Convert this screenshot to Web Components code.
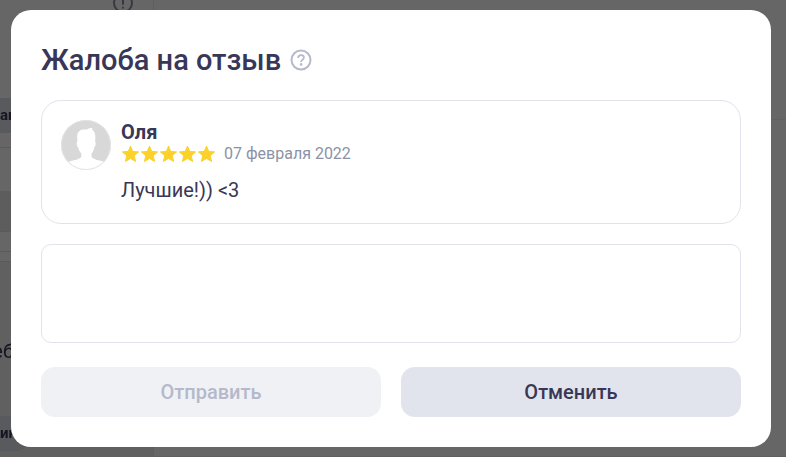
<!DOCTYPE html>
<html lang="ru">
<head>
<meta charset="utf-8">
<meta name="viewport" content="width=device-width, initial-scale=1">
<title>Жалоба на отзыв</title>
<style>
  body { margin: 0; min-height: 100vh; overflow: hidden; background: #fff; color: #393757; font-family: Roboto, "Noto Sans", sans-serif; }
</style>
</head>
<body>
<reviews-page></reviews-page>
<modal-overlay>
  <complaint-dialog heading="Жалоба на отзыв">
    <review-card author="Оля" rating="5" date="07 февраля 2022">Лучшие!)) &lt;3</review-card>
    <complaint-text label="Текст жалобы"></complaint-text>
    <ui-button slot="actions" disabled>Отправить</ui-button>
    <ui-button slot="actions">Отменить</ui-button>
  </complaint-dialog>
</modal-overlay>

<script>
class BaseElement extends HTMLElement {
  render(html) {
    if (!this.shadowRoot) this.attachShadow({ mode: 'open' });
    this.shadowRoot.innerHTML = '<style>*{box-sizing:border-box}</style>' + html;
  }
}

// The page behind the dialog
customElements.define('reviews-page', class extends BaseElement {
  connectedCallback() {
    this.render(`
      <style>
        :host { display: grid; grid-template-columns: 154px 1fr; position: fixed; inset: 0; overflow: hidden; }
        aside { border-right: 1px solid #ebebef; display: flex; flex-direction: column; }
        .head { height: 98px; display: flex; justify-content: flex-end; align-items: flex-start; padding-right: 19px; }
        .head svg { margin-top: -8px; flex: none; }
        .chip { flex: none; height: 35px; width: 28px; border-radius: 0 10px 10px 0; background: #dde0e8; font-weight: 700; font-size: 15px; line-height: 35px; }
        .wide { width: 100%; }
        .row { border-top: 1px solid #e2e2e8; margin-top: 14px; height: 44px; }
        .fill { background: #e8e8eb; height: 41px; border-bottom: 1px solid #e2e2e8; }
        .gap { height: 20px; border-bottom: 1px solid #e2e2e8; }
        .gap.small { height: 10px; }
        .body { background: #f0f0f2; flex: 1; display: flex; flex-direction: column; gap: 53px; padding-top: 77px; }
        .text { display: flex; justify-content: flex-end; width: 14px; font-size: 20px; line-height: 24px; }
        main { border-bottom: 1px solid #f0f0f2; }
        main div { height: 120px; border-bottom: 1px solid #f2f2f5; }
      </style>
      <aside>
        <div class="head">
          <svg width="22" height="22" viewBox="0 0 22 22" fill="none" stroke="#8a90a3" stroke-width="2" stroke-linecap="round"><circle cx="11" cy="11" r="9"/><path d="M11 6v6M11 15.500v.2"/></svg>
        </div>
        <div class="chip wide">ан</div>
        <div class="row"></div>
        <div class="fill"></div>
        <div class="gap"></div>
        <div class="gap small"></div>
        <div class="body">
          <div class="text">еб</div>
          <div class="chip">ин</div>
        </div>
      </aside>
      <main><div></div></main>`);
  }
});

customElements.define('modal-overlay', class extends BaseElement {
  connectedCallback() {
    this.render(`
      <style>
        :host { display: block; box-sizing: border-box; position: fixed; inset: 0; overflow: auto; padding: 10px 15px 10px 11px; background: rgba(0,0,0,.6); }
      </style>
      <slot></slot>`);
  }
});

customElements.define('help-button', class extends BaseElement {
  connectedCallback() {
    this.render(`
      <style>
        :host { display: block; }
        button { display: block; padding: 0; border: 0; background: none; cursor: pointer; }
        svg { display: block; }
      </style>
      <button type="button" aria-label="Справка">
        <svg width="22" height="22" viewBox="0 0 22 22" fill="none" stroke="#b5b9ca" stroke-width="2"><circle cx="11" cy="11" r="9.500"/><path d="M8.200 8.900C8.200 7.200 9.400 6.200 11.100 6.200C12.800 6.200 13.900 7.200 13.900 8.600C13.900 10.700 11.100 10.700 11.100 12.900" stroke-width="1.800"/><circle cx="11.100" cy="15.400" r="1.300" fill="#b5b9ca" stroke="none"/></svg>
      </button>`);
  }
});

customElements.define('complaint-dialog', class extends BaseElement {
  connectedCallback() {
    this.render(`
      <style>
        :host { display: block; }
        section { background: #fff; border-radius: 20px; padding: 30px; display: flex; flex-direction: column; gap: 24px; }
        header { display: flex; align-items: center; gap: 9px; }
        h1 { margin: 0; font-size: 29px; font-weight: 500; line-height: 40px; }
        .content { display: flex; flex-direction: column; gap: 20px; }
        footer { display: grid; grid-template-columns: 1fr 1fr; gap: 20px; }
      </style>
      <section role="dialog" aria-labelledby="title">
        <div class="content">
          <header><h1 id="title">${this.getAttribute('heading')}</h1><help-button></help-button></header>
          <slot></slot>
        </div>
        <footer><slot name="actions"></slot></footer>
      </section>`);
  }
});

customElements.define('user-avatar', class extends BaseElement {
  connectedCallback() {
    this.render(`
      <style>:host { display: block; flex: none; } svg { display: block; }</style>
      <svg width="50" height="50" viewBox="0 0 50 50" aria-hidden="true">
        <clipPath id="round"><circle cx="25" cy="25" r="25"/></clipPath>
        <g clip-path="url(#round)">
          <rect width="50" height="50" fill="#d8d8d8"/>
          <path fill="#fff" d="M0 50C2 44 6 42 12 40.500C17 39.300 19.800 38.500 20.300 36.500V33.500C18.700 31.800 17.700 29.800 17.300 27.500C16 27 15.500 24 15.700 22.500C15.800 21.700 16.200 21.500 16.700 21.500C15.600 16 16.300 12.500 18.500 11C20 9.200 23 9.300 26 9.500C28 8 31 8 31.500 8.200L31 9.500C34.500 11.500 34.900 17 34 21.500C35.300 21.800 34.800 26.800 33.200 27.500C32.900 30 32 32 30.500 33.500V36.500C31 38.500 33.800 39.300 38.500 40.500C44.500 42 48 44 50 50Z"/>
        </g>
        <circle cx="25" cy="25" r="24.500" fill="none" stroke="#e4e4e4"/>
      </svg>`);
  }
});

customElements.define('star-rating', class extends BaseElement {
  connectedCallback() {
    const value = Number(this.getAttribute('value'));
    const star = '<svg width="19" height="20" viewBox="0 0 19 20" aria-hidden="true"><path fill="#fbd12a" stroke="#fbd12a" stroke-linejoin="round" d="M9.500 2.200L11.700 7.400L17.600 7.900L13.200 11.700L14.600 17.400L9.500 14.500L4.400 17.400L5.800 11.700L1.400 7.900L7.300 7.400Z"/></svg>';
    this.render(`
      <style>:host { display: block; } div { display: flex; } svg { display: block; }</style>
      <div role="img" aria-label="Оценка: ${value} из 5">${star.repeat(value)}</div>`);
  }
});

customElements.define('review-card', class extends BaseElement {
  connectedCallback() {
    this.render(`
      <style>
        :host { display: block; }
        article { display: flex; gap: 10px; padding: 19px; border: 1px solid #e2e2ec; border-radius: 20px; }
        h2 { margin: 0; font-size: 20px; font-weight: 700; line-height: 24px; }
        .meta { display: flex; align-items: center; gap: 8px; color: #8b92a6; font-size: 16px; line-height: 20px; }
        p { margin: 12px 0 0; font-size: 20px; line-height: 28px; }
      </style>
      <article>
        <user-avatar></user-avatar>
        <div>
          <h2>${this.getAttribute('author')}</h2>
          <div class="meta">
            <star-rating value="${this.getAttribute('rating')}"></star-rating>
            <time datetime="2022-02-07">${this.getAttribute('date')}</time>
          </div>
          <p><slot></slot></p>
        </div>
      </article>`);
  }
});

customElements.define('complaint-text', class extends BaseElement {
  connectedCallback() {
    this.render(`
      <style>
        :host { display: block; }
        textarea { display: block; width: 100%; height: 99px; margin: 0; padding: 12px 16px; border: 1px solid #e2e2ec; border-radius: 10px; background: #fff; color: inherit; font: 400 20px/28px Roboto, sans-serif; resize: none; outline: none; }
        textarea:focus { border-color: #b5b9ca; }
      </style>
      <textarea aria-label="${this.getAttribute('label')}"></textarea>`);
  }
});

customElements.define('ui-button', class extends BaseElement {
  connectedCallback() {
    this.render(`
      <style>
        :host { display: block; }
        button { display: block; width: 100%; padding: 11px 20px; border: 0; border-radius: 14px; background: #e1e4ec; color: inherit; font: 500 20px/28px Roboto, "Noto Sans", sans-serif; cursor: pointer; }
        button:disabled { background: #f0f1f5; color: #b5b9ca; cursor: default; }
      </style>
      <button type="button" ${this.hasAttribute('disabled') ? 'disabled' : ''}><slot></slot></button>`);
  }
});
</script>
</body>
</html>
